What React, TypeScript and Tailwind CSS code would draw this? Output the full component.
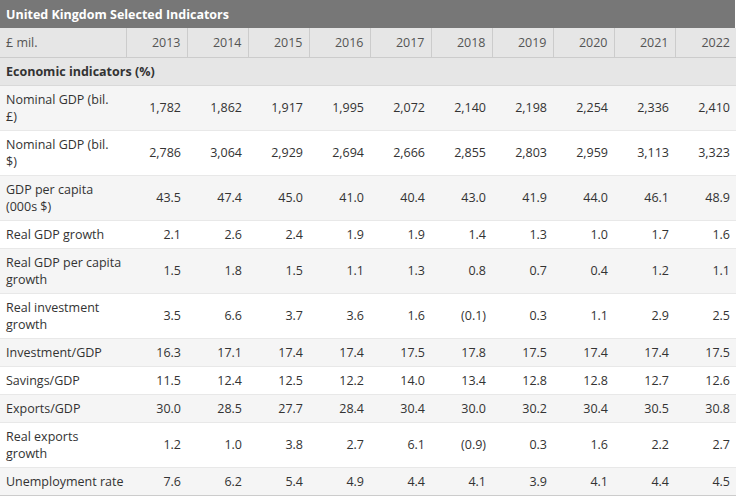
const years = ["2013", "2014", "2015", "2016", "2017", "2018", "2019", "2020", "2021", "2022"];

const rows: { label: string; values: string[]; nowrap?: boolean }[] = [
  { label: "Nominal GDP (bil. £)", values: ["1,782", "1,862", "1,917", "1,995", "2,072", "2,140", "2,198", "2,254", "2,336", "2,410"] },
  { label: "Nominal GDP (bil. $)", values: ["2,786", "3,064", "2,929", "2,694", "2,666", "2,855", "2,803", "2,959", "3,113", "3,323"] },
  { label: "GDP per capita (000s $)", values: ["43.5", "47.4", "45.0", "41.0", "40.4", "43.0", "41.9", "44.0", "46.1", "48.9"] },
  { label: "Real GDP growth", values: ["2.1", "2.6", "2.4", "1.9", "1.9", "1.4", "1.3", "1.0", "1.7", "1.6"] },
  { label: "Real GDP per capita growth", values: ["1.5", "1.8", "1.5", "1.1", "1.3", "0.8", "0.7", "0.4", "1.2", "1.1"] },
  { label: "Real investment growth", values: ["3.5", "6.6", "3.7", "3.6", "1.6", "(0.1)", "0.3", "1.1", "2.9", "2.5"] },
  { label: "Investment/GDP", values: ["16.3", "17.1", "17.4", "17.4", "17.5", "17.8", "17.5", "17.4", "17.4", "17.5"] },
  { label: "Savings/GDP", values: ["11.5", "12.4", "12.5", "12.2", "14.0", "13.4", "12.8", "12.8", "12.7", "12.6"] },
  { label: "Exports/GDP", values: ["30.0", "28.5", "27.7", "28.4", "30.4", "30.0", "30.2", "30.4", "30.5", "30.8"] },
  { label: "Real exports growth", values: ["1.2", "1.0", "3.8", "2.7", "6.1", "(0.9)", "0.3", "1.6", "2.2", "2.7"] },
  { label: "Unemployment rate", values: ["7.6", "6.2", "5.4", "4.9", "4.4", "4.1", "3.9", "4.1", "4.4", "4.5"], nowrap: true },
];

export default function App() {
  return (
    <div className="w-[739px] h-[497px] bg-white text-[12.5px] leading-[17px] text-[#333] font-['Open_Sans',sans-serif]">
      <div className="w-[735px]">
        <div className="h-[28px] bg-[#777777] px-[6px] flex items-center font-bold text-white">
          United Kingdom Selected Indicators
        </div>
        <table className="w-[735px] table-fixed border-collapse">
          <colgroup>
            <col className="w-[126px]" />
            {years.map((y) => (
              <col key={y} className="w-[61px]" />
            ))}
          </colgroup>
          <thead>
            <tr className="bg-[#e6e6e6] text-[#555] h-[29px]">
              <th className="text-left font-normal px-[6px] border-b border-[#cccccc]">£ mil.</th>
              {years.map((y) => (
                <th key={y} className="text-right font-normal px-[6px] border-l border-b border-[#cccccc]">
                  {y}
                </th>
              ))}
            </tr>
          </thead>
          <tbody>
            <tr className="bg-[#e6e6e6] h-[28px]">
              <td colSpan={11} className="px-[6px] font-bold border-b border-[#d9d9d9]">
                Economic indicators (%)
              </td>
            </tr>
            {rows.map((r, i) => (
              <tr key={r.label} className={i % 2 === 0 ? "bg-[#f5f5f5]" : "bg-white"}>
                <td
                  className={
                    "pl-[6px] pr-[4px] py-[5px] align-middle border-b " +
                    (r.nowrap ? "whitespace-nowrap " : "") +
                    (i === rows.length - 1 ? "border-[#cccccc]" : "border-[#e8e8e8]")
                  }
                >
                  {r.label}
                </td>
                {r.values.map((v, j) => (
                  <td
                    key={j}
                    className={
                      "px-[6px] py-[5px] text-right align-middle border-b " +
                      (i === rows.length - 1 ? "border-[#cccccc]" : "border-[#e8e8e8]")
                    }
                  >
                    {v}
                  </td>
                ))}
              </tr>
            ))}
          </tbody>
        </table>
      </div>
    </div>
  );
}
